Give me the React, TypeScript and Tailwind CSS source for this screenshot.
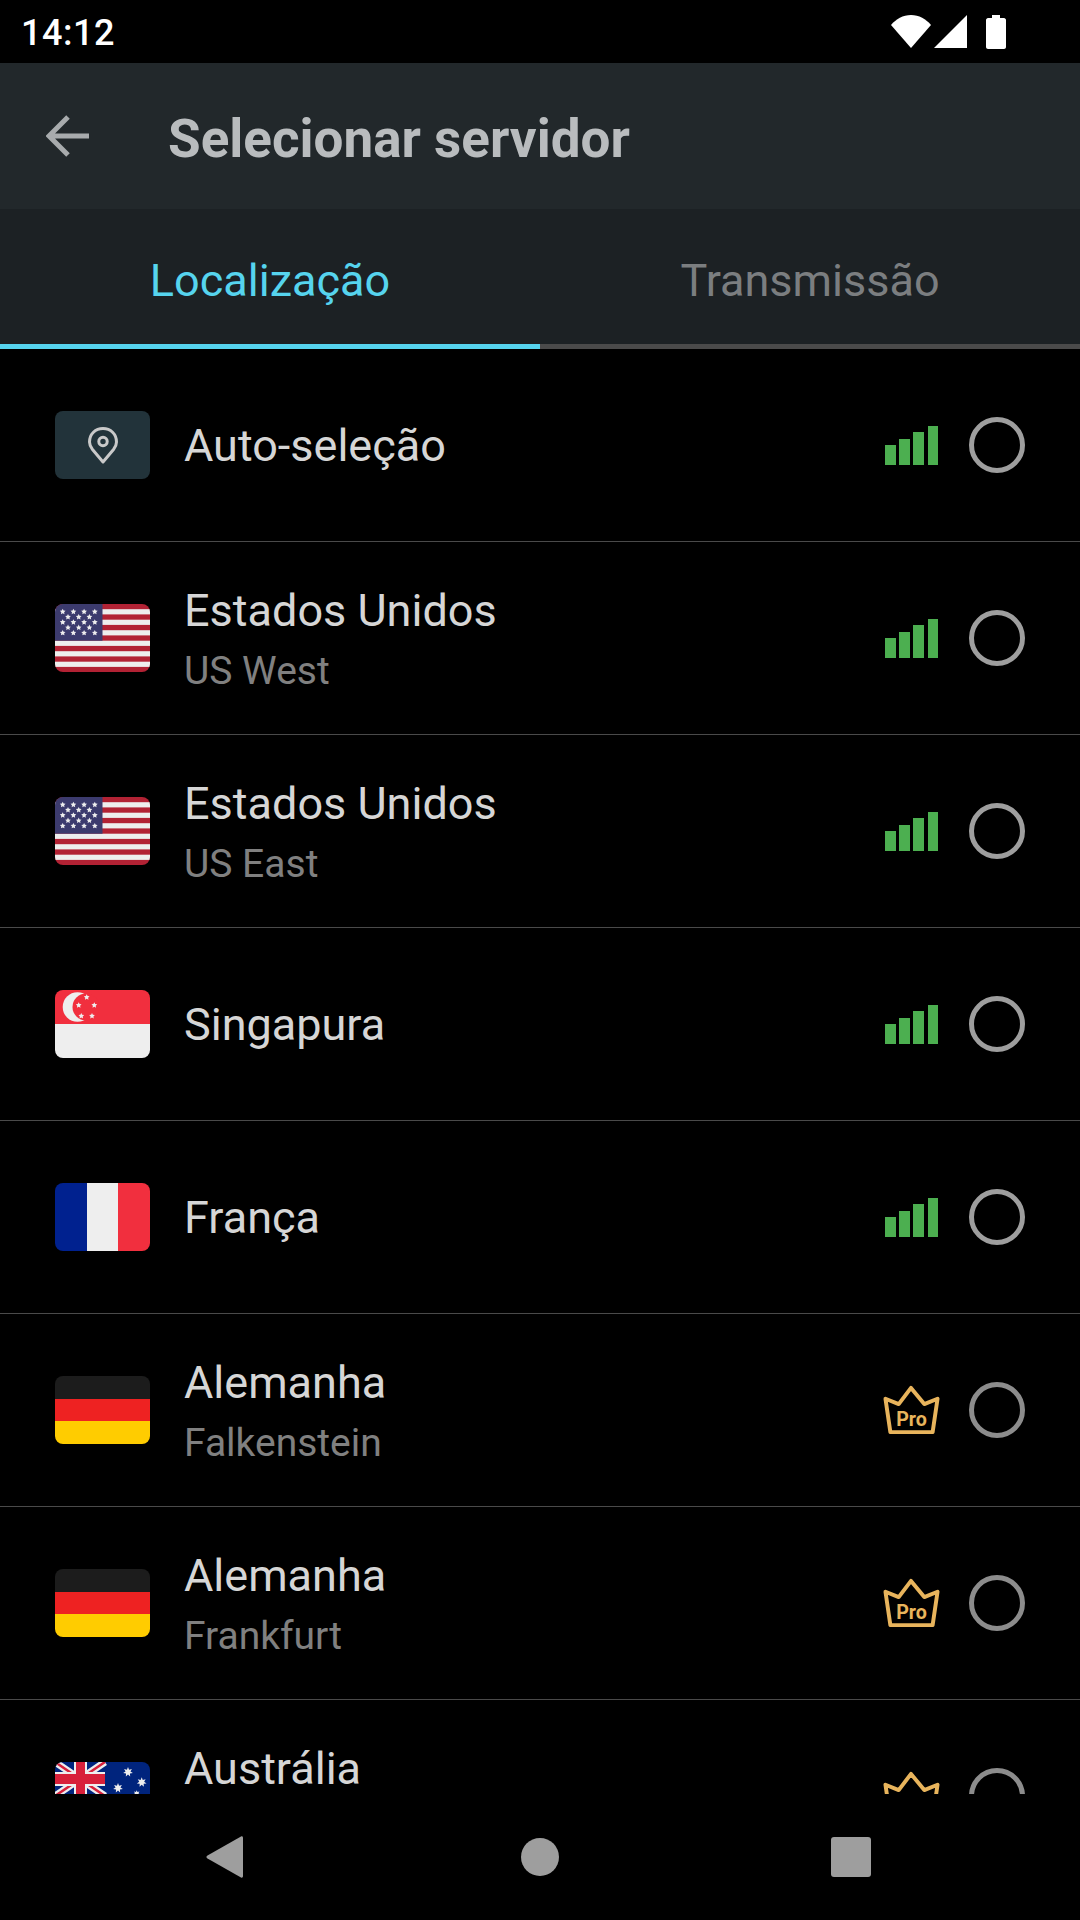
import React from 'react';

const FONT = "font-['Roboto',sans-serif]";

const starPoints = (cx: number, cy: number, r: number, n = 5) => {
  const pts: string[] = [];
  for (let i = 0; i < n * 2; i++) {
    const rad = i % 2 === 0 ? r : r * 0.5;
    const a = (Math.PI * i) / n - Math.PI / 2;
    pts.push(`${cx + rad * Math.cos(a)},${cy + rad * Math.sin(a)}`);
  }
  return pts.join(' ');
};

const UsFlag = () => {
  const stars: [number, number][] = [];
  for (let r = 0; r < 5; r++) {
    const n = r % 2 === 0 ? 4 : 3;
    for (let c = 0; c < n; c++) {
      stars.push([r % 2 === 0 ? 7.7 + c * 10.7 : 13 + c * 10.7, 7.7 + r * 5.3]);
    }
  }
  return (
    <svg width="95" height="68" viewBox="0 0 95 68" className="rounded-[8px] block">
      <rect width="95" height="68" fill="#b22234" />
      {[5.2, 15.7, 26.2, 36.7, 47.2, 57.7].map((y) => (
        <rect key={y} y={y} width="95" height="5.2" fill="#eeeeee" />
      ))}
      <rect width="47.5" height="36.7" fill="#3c3b6e" />
      {stars.map(([x, y], i) => (
        <polygon key={i} points={starPoints(x, y, 3)} fill="#eeeeee" />
      ))}
    </svg>
  );
};

const AutoFlag = () => (
  <div className="w-[95px] h-[68px] rounded-[8px] bg-[#22333a] flex items-center justify-center">
    <svg width="30" height="37" viewBox="0 0 30 37" fill="none" stroke="#c9c9c9" strokeWidth="3" strokeLinejoin="round">
      <path d="M15 35 L4.500 22.500 C2.500 20 1.500 17.500 1.500 15 C1.500 7 7.500 1.500 15 1.500 C22.500 1.500 28.500 7 28.500 15 C28.500 17.500 27.500 20 25.500 22.500 Z" />
      <circle cx="15" cy="14.500" r="4.200" />
    </svg>
  </div>
);

const SgFlag = () => (
  <svg width="95" height="68" viewBox="0 0 95 68" className="rounded-[8px] block">
    <rect width="95" height="34" fill="#f12f3e" />
    <rect y="34" width="95" height="34" fill="#eeeeee" />
    <circle cx="22.500" cy="17" r="14.800" fill="#eeeeee" />
    <circle cx="31" cy="17" r="13.500" fill="#f12f3e" />
    {[[31.7, 7.300], [23.7, 15.300], [39.300, 15.300], [26.300, 26], [37, 26]].map(([x, y]) => (
      <polygon key={`${x}-${y}`} points={starPoints(x, y, 3)} fill="#eeeeee" />
    ))}
  </svg>
);

const FrFlag = () => (
  <div className="w-[95px] h-[68px] rounded-[8px] overflow-hidden flex">
    <div className="w-[32px] bg-[#00218f]" />
    <div className="w-[31px] bg-[#eeeeee]" />
    <div className="w-[32px] bg-[#f12f3e]" />
  </div>
);

const DeFlag = () => (
  <div className="w-[95px] h-[68px] rounded-[8px] overflow-hidden flex flex-col">
    <div className="h-[23px] bg-[#1c1c1c]" />
    <div className="h-[22px] bg-[#ee2222]" />
    <div className="h-[23px] bg-[#ffcc00]" />
  </div>
);

const AuFlag = () => (
  <svg width="95" height="68" viewBox="0 0 95 68" className="rounded-[8px] block">
    <rect width="95" height="68" fill="#00247d" />
    <path d="M0 0 L50 34 M50 0 L0 34" stroke="#eeeeee" strokeWidth="7" />
    <path d="M0 0 L50 34 M50 0 L0 34" stroke="#d8203a" strokeWidth="2.500" />
    <rect x="19" y="0" width="13" height="34" fill="#eeeeee" />
    <rect x="0" y="10" width="50" height="14" fill="#eeeeee" />
    <rect x="21" y="0" width="9" height="34" fill="#d8203a" />
    <rect x="0" y="12" width="50" height="10" fill="#d8203a" />
    {[[73, 10, 5], [86.7, 20.300, 5], [63, 26, 5], [81.7, 31.700, 3.500]].map(([x, y, r]) => (
      <polygon key={x} points={starPoints(x, y, r, 7)} fill="#eeeeee" />
    ))}
  </svg>
);

const Signal = () => (
  <div className="flex items-end gap-[3.700px] w-[57px] h-[40px] pl-[2px]">
    <div className="w-[10.500px] h-[20px] bg-[#4caf50]" />
    <div className="w-[10.500px] h-[26px] bg-[#4caf50]" />
    <div className="w-[10.500px] h-[33px] bg-[#4caf50]" />
    <div className="w-[10.500px] h-[39px] bg-[#4caf50]" />
  </div>
);

const Crown = () => (
  <svg width="58" height="50" viewBox="0 0 58 50" fill="none">
    <path
      d="M16 19 L28.500 2.500 L42 19 L55.500 13.500 L50.500 47.500 L7.500 47.500 L2.500 13.500 Z"
      stroke="#e8b45c"
      strokeWidth="4"
      strokeLinejoin="round"
    />
    <text x="29" y="41" textAnchor="middle" fill="#e8b45c" fontSize="20" fontWeight="700" fontFamily="Roboto, sans-serif">
      Pro
    </text>
  </svg>
);

type Server = {
  name: string;
  sub?: string;
  flag: React.ReactNode;
  pro?: boolean;
};

const servers: Server[] = [
  { name: 'Auto-seleção', flag: <AutoFlag /> },
  { name: 'Estados Unidos', sub: 'US West', flag: <UsFlag /> },
  { name: 'Estados Unidos', sub: 'US East', flag: <UsFlag /> },
  { name: 'Singapura', flag: <SgFlag /> },
  { name: 'França', flag: <FrFlag /> },
  { name: 'Alemanha', sub: 'Falkenstein', flag: <DeFlag />, pro: true },
  { name: 'Alemanha', sub: 'Frankfurt', flag: <DeFlag />, pro: true },
  // second line sits under the nav bar, only its height counts
  { name: 'Austrália', sub: '\u00a0', flag: <AuFlag />, pro: true },
];

const Row = ({ server }: { server: Server }) => (
  <div className="h-[193px] shrink-0 flex items-center pl-[55px] pr-[55px] border-b border-[#4a4a4a]">
    <div className="shrink-0">{server.flag}</div>
    <div className="ml-[34px] pt-[2px] flex-1 flex flex-col">
      <div className="text-[45px] leading-[56px] text-[#d6d6d6]">{server.name}</div>
      {server.sub && <div className="text-[39px] leading-[50px] mt-[7px] text-[#808080]">{server.sub}</div>}
    </div>
    <div className="w-[57px] flex justify-center">{server.pro ? <Crown /> : <Signal />}</div>
    <div
      className={`ml-[29px] w-[56px] h-[56px] rounded-full border-[5px] ${server.pro ? 'border-[#8c8c8c]' : 'border-[#9e9e9e]'}`}
    />
  </div>
);

export default function App() {
  return (
    <div className={`w-[1080px] h-[1920px] bg-black flex flex-col overflow-hidden ${FONT}`}>
      {/* status bar */}
      <div className="h-[63px] shrink-0 flex items-center justify-between pl-[21px] pr-[74px]">
        <span className="text-[36px] font-medium text-white tracking-[0.5px] pt-[2px]">14:12</span>
        <div className="flex items-center">
          <svg width="40" height="33" viewBox="0 0 40 33" fill="white">
            <path d="M0 10 C5 4 12 0 20 0 C28 0 35 4 40 10 L20 33 Z" />
          </svg>
          <svg width="33" height="33" viewBox="0 0 33 33" fill="white" className="ml-[3px]">
            <path d="M33 0 V33 H0 Z" />
          </svg>
          <svg width="20" height="34" viewBox="0 0 20 34" fill="white" className="ml-[19px]">
            <path d="M6 0 H14 V3 H18 C19 3 20 4 20 5 V32 C20 33 19 34 18 34 H2 C1 34 0 33 0 32 V5 C0 4 1 3 2 3 H6 Z" />
          </svg>
        </div>
      </div>

      {/* app bar */}
      <div className="h-[146px] shrink-0 bg-[#22282b] flex items-center pl-[46px]">
        <svg width="44" height="42" viewBox="0 0 44 42" fill="none" stroke="#a8abad" strokeWidth="5">
          <path d="M43 21 H4 M22 2 L3 21 L22 40" />
        </svg>
        <span className="ml-[78px] pt-[7px] text-[53px] font-bold text-[#b9bcbe]">Selecionar servidor</span>
      </div>

      {/* tabs */}
      <div className="h-[140px] shrink-0 bg-[#1c2124] flex">
        <div className="w-[540px] pt-[9px] flex items-center justify-center border-b-[5px] border-[#56d4ee] text-[45px] text-[#56d4ee]">
          Localização
        </div>
        <div className="w-[540px] pt-[9px] flex items-center justify-center border-b-[5px] border-[#4a4a4a] text-[45px] text-[#7b7e80]">
          Transmissão
        </div>
      </div>

      {/* list */}
      <div className="flex-1 min-h-0 overflow-hidden flex flex-col">
        {servers.map((s) => (
          <Row key={s.name + (s.sub ?? '')} server={s} />
        ))}
      </div>

      {/* nav bar */}
      <div className="h-[126px] shrink-0 flex items-center pl-[206px]">
        <svg width="37" height="42" viewBox="0 0 37 42" fill="#9e9e9e">
          <path d="M35 0.500 C36 0 37 0.500 37 2 V40 C37 41.500 36 42 35 41.500 L1.500 22.500 C0 21.500 0 20.500 1.500 19.500 Z" />
        </svg>
        <div className="ml-[278px] w-[38px] h-[38px] rounded-full bg-[#9e9e9e]" />
        <div className="ml-[272px] w-[40px] h-[40px] rounded-[3px] bg-[#9e9e9e]" />
      </div>
    </div>
  );
}
